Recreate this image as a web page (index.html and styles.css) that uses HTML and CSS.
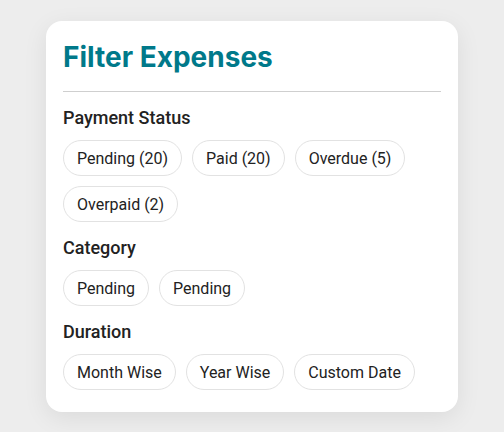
FILE: index.html
```html
<!DOCTYPE html>
<html lang="en">

<head>
    <meta charset="UTF-8" />
    <meta name="viewport" content="width=device-width, initial-scale=1.0" />
    <title>Filter Expenses</title>
    <link rel="stylesheet" href="styles.css">
</head>

<body>

    <div class="filter-card">
        <h2 class="filter-title">Filter Expenses</h2>

        <div class="filter-group">
            <h4>Payment Status</h4>
            <div class="chips">
                <button class="chip">Pending (20)</button>
                <button class="chip">Paid (20)</button>
                <button class="chip">Overdue (5)</button>
                <button class="chip">Overpaid (2)</button>
            </div>
        </div>

        <div class="filter-group">
            <h4>Category</h4>
            <div class="chips">
                <button class="chip">Pending</button>
                <button class="chip">Pending</button>
            </div>
        </div>

        <div class="filter-group">
            <h4>Duration</h4>
            <div class="chips">
                <button class="chip">Month Wise</button>
                <button class="chip">Year Wise</button>
                <button class="chip">Custom Date</button>
            </div>
        </div>
    </div>

</body>

</html>
```

FILE: styles.css
```css
* {
    box-sizing: border-box;
}

body {
    font-family: Roboto, "Liberation Sans", sans-serif;
    margin: 0;
    padding: 21px 46px;
    background: #ededed;
}

.filter-card {
    width: 412px;
    background: #fff;
    border-radius: 16px;
    padding: 20px 17px 22px;
    box-shadow: 0 6px 24px rgba(0, 0, 0, 0.08);
}

.filter-title {
    margin: 0 0 2px;
    font-family: Inter, Roboto, sans-serif;
    font-size: 28px;
    line-height: 32px;
    font-weight: 700;
    color: #00798a;
    padding: 0 0 18px;
    border-bottom: 1.5px solid #cfcfcf;
}

.filter-group {
    margin-top: 14px;
}

.filter-group h4 {
    margin: 0 0 10px;
    font-size: 18px;
    line-height: 24px;
    font-weight: 500;
    color: #222;
}

.chips {
    display: flex;
    flex-wrap: wrap;
    gap: 10px;
}

.chip {
    height: 36px;
    padding: 0 13px;
    border: 1px solid #e2e2e2;
    border-radius: 18px;
    background: #fff;
    font-family: Roboto, "Liberation Sans", sans-serif;
    font-size: 16px;
    color: #222;
}
```
